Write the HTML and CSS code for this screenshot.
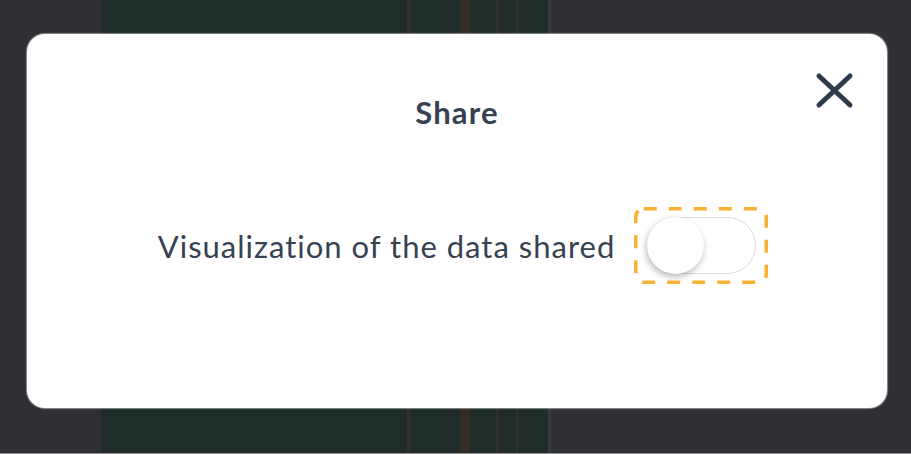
FILE: index.html
```html
<!DOCTYPE html>
<html lang="en">
<head>
<meta charset="utf-8">
<title>Share</title>
<link rel="stylesheet" href="styles.css">
</head>
<body>
<div class="backdrop">
  <div class="side"></div>
  <div class="panel">
    <span class="streak s1"></span>
    <span class="streak s2"></span>
    <span class="streak s3"></span>
    <span class="streak s4"></span>
    <span class="streak s5"></span>
  </div>
  <div class="side rest"></div>
</div>
<div class="modal">
  <button class="close" aria-label="Close">
    <svg width="40" height="40" viewBox="0 0 40 40"><path d="M4 5 L35 34 M35 5 L4 34" stroke="#2e3b4b" stroke-width="5" stroke-linecap="round" fill="none"/></svg>
  </button>
  <h2 class="title">Share</h2>
  <div class="row">
    <span class="label">Visualization of the data shared</span>
    <span class="focus">
      <svg class="ring" width="134" height="77" viewBox="0 0 134 77"><rect x="1.75" y="1.75" width="130.5" height="73.5" rx="8" fill="none" stroke="#f9b132" stroke-width="3.5" stroke-dasharray="13 12"/></svg>
      <span class="switch"><span class="knob"></span></span>
    </span>
  </div>
</div>
</body>
</html>
```
FILE: styles.css
```css
html, body {
  margin: 0;
  padding: 0;
  height: 100%;
}
body {
  background: #2f3033;
  font-family: Lato, "Noto Sans", sans-serif;
  overflow: hidden;
  border-bottom: 1px solid #8d8f90;
  box-sizing: border-box;
}
.backdrop {
  display: flex;
  height: 100%;
}
.side {
  width: 101px;
  background: #2f3033;
}
.side.rest {
  flex: 1;
}
.panel {
  width: 450px;
  background: #1f2c29;
  display: flex;
}
.streak {
  display: block;
  height: 100%;
  background: #33302a;
}
.s1 { margin-left: 306px; width: 3px; }
.s2 { margin-left: 50px; width: 12px; background: #342d26; }
.s3 { margin-left: 26px; width: 3px; }
.s4 { margin-left: 17px; width: 3px; }
.s5 { margin-left: 30px; width: 3px; background: #3a3a3c; }

.modal {
  position: absolute;
  left: 27px;
  top: 34px;
  width: 860px;
  height: 374px;
  background: #fff;
  border-radius: 18px;
  box-shadow: 0 0 1px 1px rgba(200,200,200,0.6);
  display: flex;
  flex-direction: column;
  align-items: center;
  color: #364152;
}
.close {
  position: absolute;
  left: 788px;
  top: 37px;
  width: 40px;
  height: 40px;
  padding: 0;
  border: 0;
  background: none;
}
.close svg { display: block; }
.title {
  margin: 60px 0 0;
  font-size: 31px;
  font-weight: 700;
  letter-spacing: 1.2px;
  line-height: 36px;
}
.row {
  display: flex;
  align-items: center;
  gap: 32px;
  margin-top: 87px;
}
.label {
  font-size: 31px;
  letter-spacing: 1px;
  line-height: 36px;
}
.focus {
  position: relative;
  display: block;
  padding: 10px 12px 10px 13px;
  margin: -10px -12px -10px -13px;
}
.ring {
  position: absolute;
  left: 0;
  top: 0;
}
.switch {
  display: flex;
  width: 107px;
  height: 55px;
  border: 1px solid #dcdcdc;
  border-radius: 29px;
  background: #fff;
}
.knob {
  width: 57px;
  height: 57px;
  margin: -1px;
  border-radius: 50%;
  background: #fff;
  box-shadow: -1px 3px 6px rgba(0,0,0,0.28);
}
```
